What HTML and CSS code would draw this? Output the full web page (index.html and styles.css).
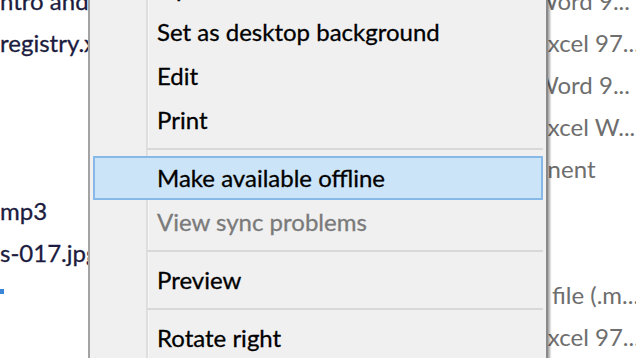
FILE: index.html
```html
<!DOCTYPE html>
<html lang="en">
<head>
<meta charset="utf-8">
<title>Context menu</title>
<link rel="stylesheet" href="styles.css">
</head>
<body>
<div class="screen">
  <div class="files">
    <div class="row"><span class="name">ntro and</span><span class="gap"></span><span class="type">Word 9...</span></div>
    <div class="row"><span class="name">registry.x</span><span class="gap"></span><span class="type">Excel 97...</span></div>
    <div class="row"><span class="name"></span><span class="gap"></span><span class="type">Word 9...</span></div>
    <div class="row"><span class="name"></span><span class="gap"></span><span class="type">Excel W...</span></div>
    <div class="row"><span class="name"></span><span class="gap"></span><span class="type">onent</span></div>
    <div class="row"><span class="name">mp3</span><span class="gap"></span><span class="type"></span></div>
    <div class="row"><span class="name">s-017.jpg</span><span class="gap"></span><span class="type"></span></div>
    <div class="row"><span class="name"><span class="dot"></span></span><span class="gap"></span><span class="type">a file (.m...</span></div>
    <div class="row"><span class="name"></span><span class="gap"></span><span class="type">Excel 97...</span></div>
  </div>

  <div class="menu">
    <div class="item">Open</div>
    <div class="item">Set as desktop background</div>
    <div class="item">Edit</div>
    <div class="item">Print</div>
    <div class="sep"></div>
    <div class="item hover">Make available offline</div>
    <div class="item disabled">View sync problems</div>
    <div class="sep"></div>
    <div class="item">Preview</div>
    <div class="sep"></div>
    <div class="item">Rotate right</div>
    <div class="item">Rotate left</div>
  </div>
</div>
</body>
</html>
```
FILE: styles.css
```css
html, body {
  margin: 0;
  padding: 0;
  background: #ffffff;
}
.screen {
  position: relative;
  width: 636px;
  height: 358px;
  overflow: hidden;
  background: #ffffff;
  font-family: Lato, "Noto Sans", sans-serif;
}
.files {
  display: flex;
  flex-direction: column;
  margin-top: -20px;
}
.row {
  display: grid;
  grid-template-columns: 88px 446px 1fr;
  height: 42px;
  line-height: 42px;
  font-size: 24px;
  white-space: nowrap;
}
.name {
  overflow: hidden;
  color: #1c1c40;
  -webkit-text-stroke: 0.3px #1c1c40;
}
.type {
  color: #6e6e6e;
  overflow: hidden;
}
.dot {
  display: inline-block;
  width: 4px;
  height: 5px;
  vertical-align: 10px;
  background: #3b86d6;
}
.menu {
  position: absolute;
  left: 88px;
  top: -36px;
  width: 460px;
  box-sizing: border-box;
  padding: 2px 3px 2px 3px;
  border-left: 2px solid #a3a3a3;
  border-right: 2px solid #8a8a8a;
  box-shadow: 2px 0 2px rgba(0, 0, 0, 0.35);
  background: linear-gradient(to right, #f0f0f0 0, #f0f0f0 56px, #dedede 56px, #dedede 58px, #f7f7f7 58px, #f7f7f7 59px, #f0f0f0 59px);
  display: flex;
  flex-direction: column;
}
.item {
  height: 44px;
  box-sizing: border-box;
  border: 2px solid transparent;
  padding-left: 62px;
  line-height: 40px;
  font-size: 24px;
  color: #000000;
  -webkit-text-stroke: 0.3px #000000;
  white-space: nowrap;
}
.item.hover {
  background: #cce4f7;
  border-color: #86b9e8;
}
.item.disabled {
  color: #7a7a7a;
  -webkit-text-stroke: 0.3px #7a7a7a;
}
.sep {
  height: 14px;
  margin-left: 54px;
  display: flex;
  flex-direction: column;
  justify-content: center;
}
.sep::before {
  content: "";
  display: block;
  height: 2px;
  background: #d8d8d8;
}
```
